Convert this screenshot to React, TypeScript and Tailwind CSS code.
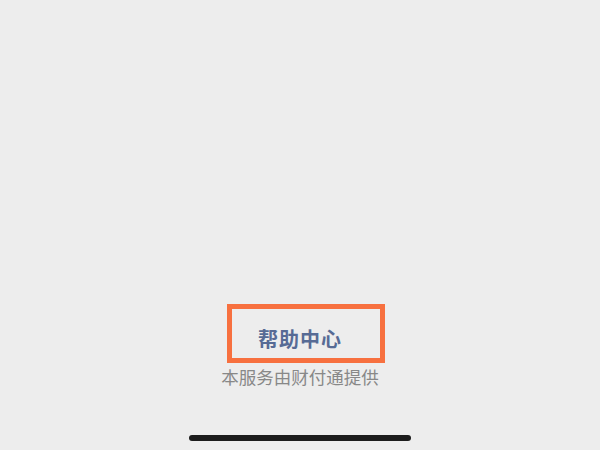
export default function App() {
  return (
    <div
      className="w-[600px] h-[450px] bg-[#ededed] flex flex-col items-center overflow-hidden"
      style={{ fontFamily: '"Noto Sans CJK SC", "Noto Sans", sans-serif' }}
    >
      <div className="flex-1" />
      <div className="relative h-[24px] flex items-center justify-center">
        <span className="text-[20px] leading-[24px] font-bold text-[#576b95] tracking-[1px]">帮助中心</span>
        <div className="absolute left-[-31px] top-[-23px] w-[158px] h-[59px] border-[5px] border-[#f7703f]" />
      </div>
      <div className="mt-[14px] text-[17.5px] leading-[24px] text-[#888888]">本服务由财付通提供</div>
      <div className="mt-[46px] mb-[9px] w-[222px] h-[6px] rounded-full bg-[#1c1c1c]" />
    </div>
  );
}
